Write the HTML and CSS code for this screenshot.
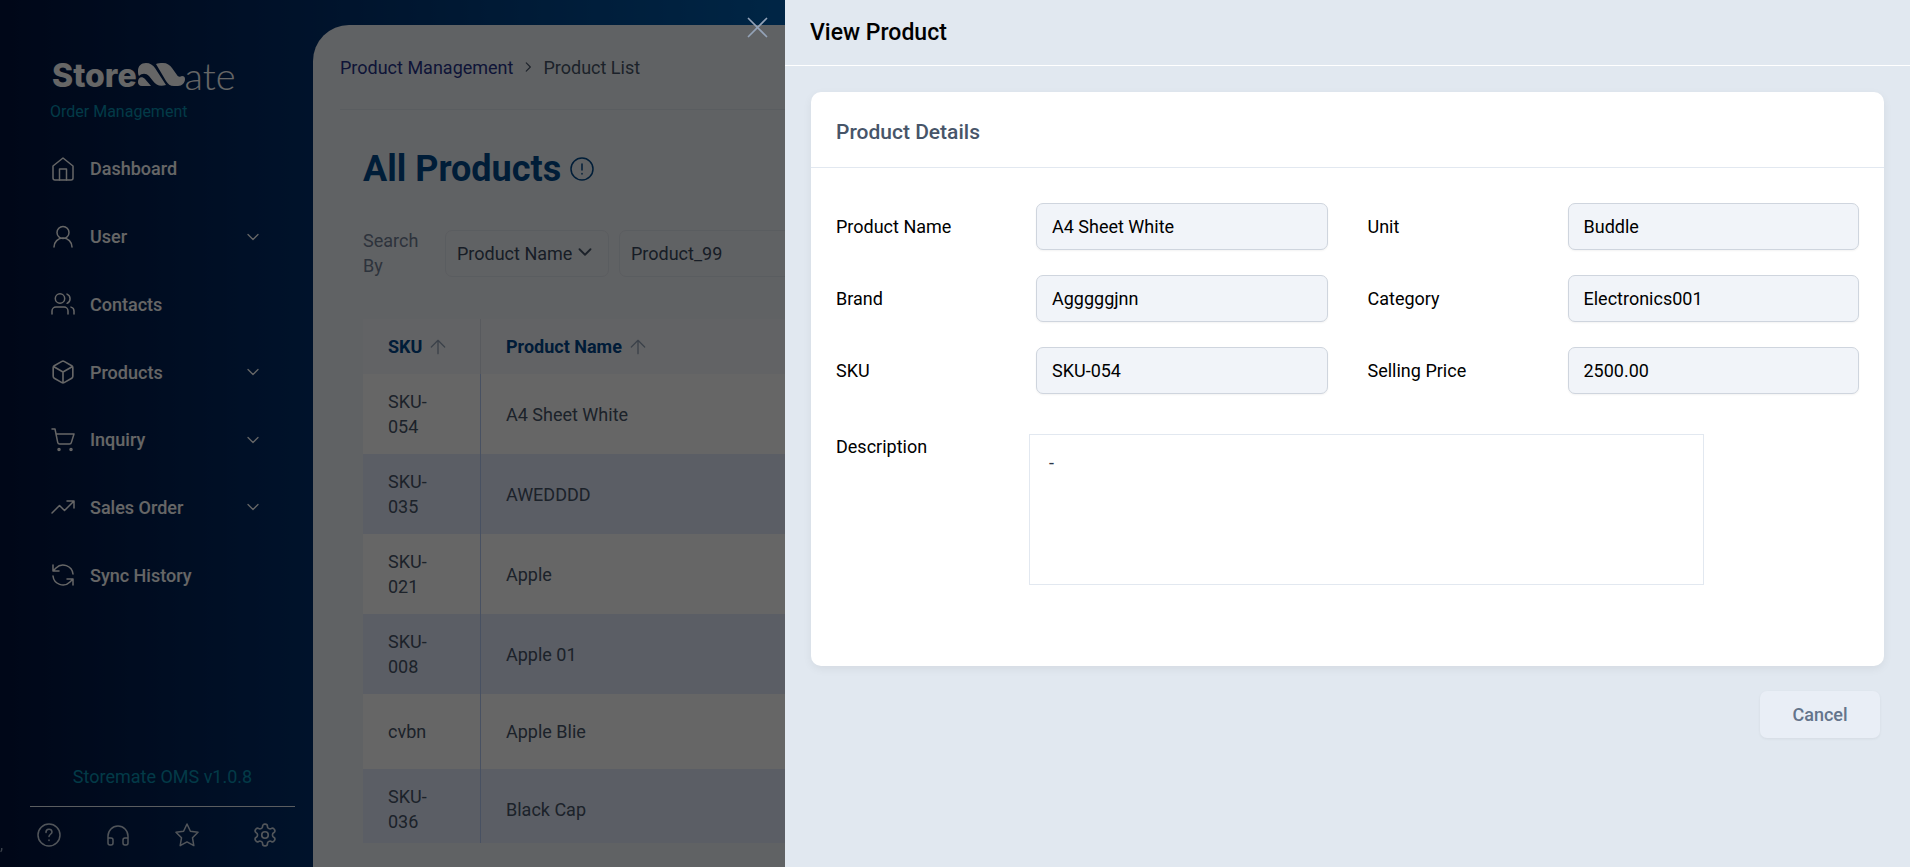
FILE: index.html
```html
<!DOCTYPE html>
<html lang="en">
<head>
<meta charset="utf-8">
<title>Storemate OMS - View Product</title>
<link rel="stylesheet" href="styles.css">
</head>
<body>
<div class="app">
  <aside class="sidebar">
    <div class="brand">
      <div class="logo">
        <span class="logo-bold">Store</span>
        <svg class="logo-mark" viewBox="0 0 48 24" aria-hidden="true">
          <path d="M1 8C1 3 4 0 9 0c4 0 7 2 9 5l11 17c-6 2-10 0-13-4l-4-5C9 10 5 10 2 13 1 12 1 9 1 8z"/>
          <path d="M1 19c0-5 4-6 7-3l6 7H5c-3 0-4-2-4-4z"/>
          <path d="M19 1c2-1 4-1 7-1 4 0 7 2 9 5l5 7c1 2 3 2 5 1 2 0 3 1 3 3 0 4-3 7-7 7h-4c-4 0-6-2-8-5z"/>
        </svg>
        <span class="logo-thin">ate</span>
      </div>
      <div class="tagline">Order Management</div>
    </div>
    <nav class="nav">
      <a class="nav-item" href="#"><svg class="icon" viewBox="0 0 24 24"><path d="M2 9l10-8 10 8v12a2 2 0 0 1-2 2H4a2 2 0 0 1-2-2z"/><path d="M8.500 23V12h7v11"/></svg><span>Dashboard</span></a>
      <a class="nav-item" href="#"><svg class="icon" viewBox="0 0 24 24"><circle cx="12" cy="7.500" r="6"/><path d="M3 22a9 9 0 0 1 18 0"/></svg><span>User</span><svg class="chevron" viewBox="0 0 24 24"><path d="M6 9l6 6 6-6"/></svg></a>
      <a class="nav-item" href="#"><svg class="icon" viewBox="0 0 24 24"><path d="M17 22v-3a4 4 0 0 0-4-4H5a4 4 0 0 0-4 4v3M23 22v-3a4 4 0 0 0-3-3.870M16 2.130a5 5 0 0 1 0 9.200"/><circle cx="9" cy="6.500" r="4.700"/></svg><span>Contacts</span></a>
      <a class="nav-item" href="#"><svg class="icon" viewBox="1 1 22 22"><path d="M21 16V8a2 2 0 0 0-1-1.730l-7-4a2 2 0 0 0-2 0l-7 4A2 2 0 0 0 3 8v8a2 2 0 0 0 1 1.730l7 4a2 2 0 0 0 2 0l7-4A2 2 0 0 0 21 16zM3.270 6.960L12 12.010l8.730-5.050M12 22.080V12"/></svg><span>Products</span><svg class="chevron" viewBox="0 0 24 24"><path d="M6 9l6 6 6-6"/></svg></a>
      <a class="nav-item" href="#"><svg class="icon" viewBox="0 0 24 24"><circle cx="8" cy="21.500" r="1"/><circle cx="20" cy="21.500" r="1"/><path d="M1 1h3l2.700 13.400a2 2 0 0 0 2 1.600h9.700a2 2 0 0 0 2-1.600L23 6H5"/></svg><span>Inquiry</span><svg class="chevron" viewBox="0 0 24 24"><path d="M6 9l6 6 6-6"/></svg></a>
      <a class="nav-item" href="#"><svg class="icon" viewBox="0 0 24 24"><path d="M23 6l-9.500 9.500-5-5L1 18M16 6h7v7"/></svg><span>Sales Order</span><svg class="chevron" viewBox="0 0 24 24"><path d="M6 9l6 6 6-6"/></svg></a>
      <a class="nav-item" href="#"><svg class="icon" viewBox="0 0 24 24"><path d="M2 2v6h6M22 11A10 10 0 0 0 5 5L2 8M22 22v-6h-6M2 13a10 10 0 0 0 17 6l3-3"/></svg><span>Sync History</span></a>
    </nav>
    <footer class="side-footer">
      <div class="version">Storemate OMS v1.0.8</div>
      <div class="side-tools">
        <button type="button" aria-label="Help"><svg class="icon" viewBox="0 0 24 24"><circle cx="12" cy="12" r="11"/><path d="M9 9.500a3 3 0 0 1 6-.5c0 2-3 2.500-3 4.500M12 17v.5"/></svg></button>
        <button type="button" aria-label="Support"><svg class="icon" viewBox="0 0 24 24"><path d="M2 20v-7a10 10 0 0 1 20 0v7M22 20a2 2 0 0 1-2 2h-1a2 2 0 0 1-2-2v-3a2 2 0 0 1 2-2h3zM2 20a2 2 0 0 0 2 2h1a2 2 0 0 0 2-2v-3a2 2 0 0 0-2-2H2z"/></svg></button>
        <button type="button" aria-label="Favourites"><svg class="icon" viewBox="0 0 24 24"><path d="M12 1l3.400 7.200 7.600 1.100-5.500 5.500 1.300 7.800-6.800-3.700-6.800 3.700 1.300-7.800L1 9.300l7.600-1.100z"/></svg></button>
        <button class="settings" type="button" aria-label="Settings"><svg class="icon" viewBox="1 1 22 22"><circle cx="12" cy="12" r="3"/><path d="M12.220 2h-.44a2 2 0 0 0-2 2v.18a2 2 0 0 1-1 1.730l-.43.25a2 2 0 0 1-2 0l-.15-.08a2 2 0 0 0-2.730.73l-.22.38a2 2 0 0 0 .73 2.730l.15.1a2 2 0 0 1 1 1.720v.51a2 2 0 0 1-1 1.740l-.15.09a2 2 0 0 0-.73 2.730l.22.38a2 2 0 0 0 2.730.73l.15-.08a2 2 0 0 1 2 0l.43.25a2 2 0 0 1 1 1.730V20a2 2 0 0 0 2 2h.44a2 2 0 0 0 2-2v-.18a2 2 0 0 1 1-1.730l.43-.25a2 2 0 0 1 2 0l.15.08a2 2 0 0 0 2.730-.73l.22-.39a2 2 0 0 0-.73-2.730l-.15-.08a2 2 0 0 1-1-1.740v-.5a2 2 0 0 1 1-1.740l.15-.09a2 2 0 0 0 .73-2.730l-.22-.38a2 2 0 0 0-2.730-.73l-.15.08a2 2 0 0 1-2 0l-.43-.25a2 2 0 0 1-1-1.730V4a2 2 0 0 0-2-2z"/></svg></button>
      </div>
    </footer>
  </aside>

  <main class="main">
    <ol class="breadcrumb">
      <li><a href="#">Product Management</a></li>
      <li><svg class="crumb-arrow" viewBox="0 0 24 24"><path d="M9 5l7 7-7 7"/></svg></li>
      <li>Product List</li>
    </ol>
    <section class="content">
      <div class="title-row">
        <h1>All Products</h1>
        <svg class="info" viewBox="0 0 24 24"><circle cx="12" cy="12" r="11"/><path d="M12 7v6M12 16.500v.5"/></svg>
      </div>
      <div class="search">
        <label class="search-label" for="search-by">Search By</label>
        <div class="select-wrap">
          <select id="search-by"><option>Product Name</option></select>
          <svg class="select-arrow" viewBox="0 0 24 24"><path d="M6 9l6 6 6-6"/></svg>
        </div>
        <input class="search-input" type="text" aria-label="Search text" value="Product_99">
      </div>
      <div class="table-wrap">
        <table class="products">
          <thead>
            <tr>
              <th class="sku" scope="col"><span class="sort">SKU <svg viewBox="0 0 24 24"><path d="M12 22V2M2 12L12 2l10 10"/></svg></span></th>
              <th scope="col"><span class="sort">Product Name <svg viewBox="0 0 24 24"><path d="M12 22V2M2 12L12 2l10 10"/></svg></span></th>
            </tr>
          </thead>
          <tbody>
            <tr><td>SKU-054</td><td>A4 Sheet White</td></tr>
            <tr><td>SKU-035</td><td>AWEDDDD</td></tr>
            <tr><td>SKU-021</td><td>Apple</td></tr>
            <tr><td>SKU-008</td><td>Apple 01</td></tr>
            <tr><td>cvbn</td><td>Apple Blie</td></tr>
            <tr><td>SKU-036</td><td>Black Cap</td></tr>
          </tbody>
        </table>
      </div>
    </section>
  </main>
</div>
<span class="edge-mark">,</span>

<div class="overlay">
  <button class="close" type="button" aria-label="Close"><svg viewBox="0 0 24 24"><path d="M4 4l16 16M20 4L4 20"/></svg></button>
  <div class="drawer" role="dialog" aria-labelledby="drawer-title">
    <header class="drawer-header"><h2 id="drawer-title">View Product</h2></header>
    <form class="drawer-body">
      <section class="card">
        <h3>Product Details</h3>
        <div class="card-body">
          <div class="fields">
            <div class="field"><label for="name">Product Name</label><input id="name" type="text" readonly value="A4 Sheet White"></div>
            <div class="field"><label for="unit">Unit</label><input id="unit" type="text" readonly value="Buddle"></div>
            <div class="field"><label for="brand">Brand</label><input id="brand" type="text" readonly value="Agggggjnn"></div>
            <div class="field"><label for="category">Category</label><input id="category" type="text" readonly value="Electronics001"></div>
            <div class="field"><label for="sku">SKU</label><input id="sku" type="text" readonly value="SKU-054"></div>
            <div class="field"><label for="price">Selling Price</label><input id="price" type="text" readonly value="2500.00"></div>
          </div>
          <div class="description">
            <label for="desc">Description</label>
            <textarea id="desc" readonly>-</textarea>
          </div>
        </div>
      </section>
      <div class="actions"><button class="cancel" type="button">Cancel</button></div>
    </form>
  </div>
</div>
</body>
</html>
```

FILE: styles.css
```css
* { box-sizing: border-box; }

body {
  margin: 0;
  font-family: Roboto, "Liberation Sans", sans-serif;
  font-size: 18px;
  line-height: 25px;
  color: #475569;
}

h1, h2, h3, ol { margin: 0; padding: 0; }
h2, h3 { font-weight: 500; }
a { color: inherit; text-decoration: none; }
button, input, select, textarea { font: inherit; color: inherit; }
svg { fill: none; stroke: currentColor; stroke-linecap: round; stroke-linejoin: round; flex: none; }

.app {
  display: flex;
  height: 100vh;
  overflow: hidden;
  padding-top: 25px;
  background: linear-gradient(to right, #00123c 0, #002e6a 300px, #0060b0 800px, #0078d0 100%);
}

/* Sidebar */
.sidebar {
  display: flex;
  flex-direction: column;
  flex: none;
  width: 313px;
  color: #fff;
}
.brand { padding: 33px 50px 0; }
.logo { display: flex; align-items: center; height: 34px; padding-left: 2px; }
.logo-bold { font-family: Inter, sans-serif; font-weight: 800; font-size: 32px; }
.logo-mark { width: 48px; height: 24px; fill: currentColor; stroke: none; }
.logo-thin { font-family: Lato, sans-serif; font-weight: 300; font-size: 38px; }
.tagline { padding-top: 7px; font-size: 16px; color: #0891b2; }

.nav { display: flex; flex-direction: column; height: 485px; padding-top: 11px; }
.nav-item {
  display: flex;
  align-items: center;
  flex: 1;
  gap: 15px;
  padding: 0 50px 0 51px;
  font-weight: 500;
}
.icon { width: 24px; height: 24px; stroke-width: 1.5; }
.chevron { width: 20px; height: 20px; margin-left: auto; stroke-width: 1.5; }

.side-footer { margin-top: auto; padding: 0 18px 20px 30px; }
.version { padding-bottom: 17px; text-align: center; color: #0891b2; }
.side-tools {
  display: flex;
  gap: 45px;
  padding: 16px 18px 0 7px;
  border-top: 1px solid #e2e8f0;
}
.side-tools button { display: flex; padding: 0; border: 0; background: none; color: #cbd5e1; }
.side-tools .settings { margin-left: auto; }
.edge-mark { position: fixed; left: 0; bottom: 10px; font-size: 16px; color: #94a3b8; }

/* Product list */
.main {
  display: flex;
  flex-direction: column;
  flex: 1;
  min-width: 0;
  padding: 0 27px 24px;
  border-top-left-radius: 36px;
  background: #f1f5f9;
}
.breadcrumb {
  display: flex;
  align-items: center;
  height: 85px;
  flex: none;
  border-bottom: 1px solid #e2e8f0;
  list-style: none;
}
.breadcrumb li { display: flex; }
.breadcrumb a { color: #26348b; }
.crumb-arrow { width: 14px; height: 14px; margin: 0 8px; stroke-width: 2; }

.content { display: flex; flex-direction: column; flex: 1; min-height: 0; padding-left: 23px; }
.title-row { display: flex; align-items: center; gap: 9px; padding-top: 37px; color: #004a8c; }
.title-row h1 { font-size: 36px; line-height: 44px; font-weight: 700; }
.info { width: 24px; height: 24px; stroke-width: 1.5; }

.search { display: flex; align-items: center; gap: 10px; padding-top: 37px; }
.search-label { width: 72px; padding-right: 10px; color: #718096; }
.select-wrap { position: relative; width: 164px; }
.select-wrap select, .search-input {
  height: 47px;
  padding: 0 11px;
  border: 1px solid #e2e8f0;
  border-radius: 7px;
  background: transparent;
  color: #3b4a60;
}
.select-wrap select { width: 100%; appearance: none; }
.select-arrow { position: absolute; right: 13px; top: 11px; width: 22px; height: 22px; stroke-width: 2; pointer-events: none; }
.search-input { width: 300px; }

.table-wrap { flex: 1; min-height: 0; margin-top: 41px; overflow: hidden; }
.products { width: 100%; border-spacing: 0; table-layout: fixed; background: #fff; }
.products th { height: 55px; padding: 0 25px; background: #f5f8fc; color: #00468c; text-align: left; font-weight: 700; }
.products td { height: 75px; padding: 15px 25px; }
.products .sku { width: 118px; border-right: 1px solid #dbe2ec; }
.products td:first-child { border-right: 1px solid #b4caf6; }
.products tr:nth-child(even) td { background: #e3eafc; }
.sort { display: flex; align-items: center; gap: 8px; white-space: nowrap; }
.sort svg { width: 16px; height: 16px; color: #94a3b8; stroke-width: 2; }

/* Drawer */
.overlay {
  position: fixed;
  inset: 0;
  display: flex;
  justify-content: flex-end;
  align-items: flex-start;
  background: rgba(0, 0, 0, 0.6);
}
.close { display: flex; margin: 14px 14px 0 0; padding: 0; border: 0; background: none; color: #94a3b8; }
.close svg { width: 27px; height: 27px; stroke-width: 1.5; }
.drawer { width: 1125px; max-width: 100%; height: 100%; overflow: auto; background: #e1e8f0; color: #000; }
.drawer-header { padding: 20px 25px; border-bottom: 1px solid #fff; }
.drawer-header h2 { font-size: 23px; line-height: 25px; }
.drawer-body { padding: 26px; }

.card { border-radius: 10px; background: #fff; box-shadow: 0 3px 10px rgba(0, 0, 0, 0.06); }
.card h3 { padding: 28px 25px 22px; border-bottom: 1px solid #e2e8f0; font-size: 21px; color: #475569; }
.card-body { padding: 35px 25px 81px; }
.fields { display: grid; grid-template-columns: 1fr 1fr; gap: 25px 40px; }
.field { display: grid; grid-template-columns: 200px 1fr; align-items: center; }
.field input {
  width: 100%;
  height: 47px;
  padding: 0 15px;
  border: 1px solid #cfd5de;
  border-radius: 7px;
  background: #f1f4f9;
  box-shadow: 0 1px 2px rgba(0, 0, 0, 0.05);
}
.description { display: grid; grid-template-columns: 193px 66%; padding-top: 40px; }
.description textarea {
  height: 151px;
  padding: 15px 19px;
  border: 1px solid #e2e8f0;
  background: #fff;
  color: #2d3748;
  resize: none;
}
.actions { display: flex; justify-content: flex-end; padding: 25px 4px 0 0; }
.cancel {
  width: 120px;
  height: 47px;
  border: 0;
  border-radius: 7px;
  background: #e9eef6;
  box-shadow: 0 1px 3px rgba(0, 0, 0, 0.06);
  color: #64748b;
  font-weight: 500;
}
```
